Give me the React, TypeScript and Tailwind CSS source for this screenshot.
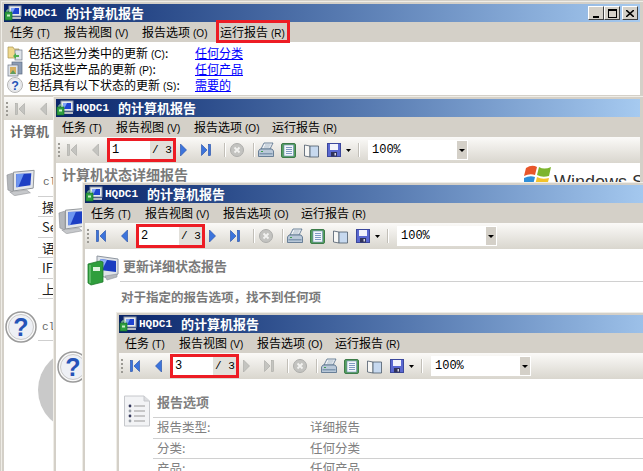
import React from "react";

const CJK = { fontFamily: '"Noto Sans CJK SC", "Liberation Sans", sans-serif' };

function Key({ k }: { k: string }) {
  return <span className="ml-[3px] text-[10px] font-['Liberation_Sans',sans-serif]">({k})</span>;
}

function Monitor({ className = "" }: { className?: string }) {
  return (
    <svg viewBox="0 0 32 28" className={className}>
      <path d="M8 3 L30 1 L29 20 L8 23 Z" fill="#e3e6ea" stroke="#8e9296" />
      <path d="M11 5 L27 4 L26 17 L11 19 Z" fill="#1d3fc4" />
      <path d="M11 5 L19 5 L13 19 L11 19 Z" fill="#6d95f0" />
      <path d="M1 6 L7 4 L7 24 L2 22 Z" fill="#b4b7bb" stroke="#85888c" strokeWidth=".6" />
      <path d="M4 24 L22 22 L26 25 L9 28 Z" fill="#c6c8cb" stroke="#909396" strokeWidth=".6" />
    </svg>
  );
}

function TitleIcon() {
  return (
    <svg viewBox="0 0 18 18" className="w-[18px] h-[18px] shrink-0">
      <rect x="5" y="2" width="12" height="10" fill="#e4e8ee" stroke="#8b95a5" />
      <rect x="7" y="4" width="8" height="6" fill="#1f44d0" />
      <path d="M7 4 H11 L8 10 H7 Z" fill="#7ea2f5" />
      <path d="M6 13 H17 V15 H6 Z" fill="#b9bdc4" />
      <rect x="1" y="8" width="7" height="8" fill="#2f9e3f" stroke="#14702a" strokeWidth=".7" />
      <path d="M3 8 V6 H6 V8" fill="none" stroke="#8fd29a" />
      <rect x="3" y="10.5" width="3" height="2" fill="#c8f0c8" />
    </svg>
  );
}

function HelpIcon({ className = "" }: { className?: string }) {
  return (
    <svg viewBox="0 0 32 32" className={className}>
      <circle cx="16" cy="16" r="15" fill="#fafafa" stroke="#9a9a9a" strokeWidth="1.5" />
      <circle cx="16" cy="16" r="12.5" fill="#eef0f5" stroke="#c9c9c9" />
      <text x="16" y="25" textAnchor="middle" fontSize="25" fontWeight="700" fill="#2554b8" fontFamily="Liberation Sans, sans-serif">?</text>
    </svg>
  );
}

function Grip() {
  return (
    <div className="flex flex-col gap-[2px] ml-[2px] w-[3px] shrink-0">
      <span className="w-[2px] h-[2px] bg-[#9c9a94]" />
      <span className="w-[2px] h-[2px] bg-[#9c9a94]" />
      <span className="w-[2px] h-[2px] bg-[#9c9a94]" />
      <span className="w-[2px] h-[2px] bg-[#9c9a94]" />
    </div>
  );
}

function Nav({ type, on, className = "" }: { type: "first" | "prev" | "next" | "last"; on: boolean; className?: string }) {
  const fill = on ? "#3c74dc" : "#c4c4c0";
  const line = on ? "#1e4aa6" : "#a8a8a4";
  const w = type === "prev" || type === "next" ? 7 : 10;
  const shape = {
    first: <><rect x=".5" y="1.5" width="2" height="11" fill={fill} stroke={line} strokeWidth=".6" /><path d="M9.5 1.5 V12.5 L4 7 Z" fill={fill} stroke={line} strokeWidth=".6" /></>,
    prev: <path d="M6.5 1 V13 L.5 7 Z" fill={fill} stroke={line} strokeWidth=".6" />,
    next: <path d="M.5 1 V13 L6.5 7 Z" fill={fill} stroke={line} strokeWidth=".6" />,
    last: <><path d="M.5 1.5 V12.5 L6 7 Z" fill={fill} stroke={line} strokeWidth=".6" /><rect x="7.5" y="1.5" width="2" height="11" fill={fill} stroke={line} strokeWidth=".6" /></>,
  }[type];
  return <svg viewBox={`0 0 ${w} 14`} className={`shrink-0 h-[14px] ${w === 7 ? "w-[7px]" : "w-[10px]"} ${className}`}>{shape}</svg>;
}

function Sep({ className = "" }: { className?: string }) {
  return <span className={`w-[2px] h-[14px] shrink-0 bg-[#c2bfb8] border-r border-white ${className}`} />;
}

function Toolbar({ page, on }: { page: string; on: [boolean, boolean] }) {
  return (
    <div className="h-[26px] shrink-0 flex items-center bg-gradient-to-b from-[#fbfaf8] to-[#d9d6ce] whitespace-nowrap">
      <Grip />
      <Nav type="first" on={on[0]} className="ml-[6px]" />
      <Nav type="prev" on={on[0]} className="ml-[15px]" />
      <div className="relative ml-[11px] w-[63px] h-[18px] shrink-0 flex text-[11px] font-['Liberation_Mono',monospace] leading-[18px]">
        <span className="w-[40px] bg-white pl-[2px] text-[12px]">{page}</span>
        <span className="w-[23px] bg-[#e2e0da] pl-[2px]">/ 3</span>
        <span className="absolute -left-[3px] -right-[3px] -top-[3px] -bottom-[3px] border-[3px] border-[#ed1c24]" />
      </div>
      <Nav type="next" on={on[1]} className="ml-[7px]" />
      <Nav type="last" on={on[1]} className="ml-[14px]" />
      <Sep className="ml-[13px]" />
      <svg viewBox="0 0 14 14" className="w-[14px] h-[14px] ml-[4px] shrink-0">
        <circle cx="7" cy="7" r="6.5" fill="#c3c3c0" stroke="#adadaa" />
        <path d="M4.5 4.5 L9.5 9.5 M9.5 4.5 L4.5 9.5" stroke="#f2f2f0" strokeWidth="1.8" />
      </svg>
      <Sep className="ml-[9px]" />
      <svg viewBox="0 0 16 16" className="w-[16px] h-[16px] ml-[3px] shrink-0">
        <path d="M6 1 H15 L12 7 H3 Z" fill="#eef1f4" stroke="#4f6a86" strokeWidth=".8" />
        <path d="M7 3 H12.5 M6 5 H11.5" stroke="#8aa0b6" strokeWidth=".7" />
        <path d="M2 7 H14 L15.5 9 V14.5 H.5 V9 Z" fill="#b9c8d8" stroke="#4f6a86" strokeWidth=".8" />
        <rect x="1.5" y="11" width="13" height="1.5" fill="#8098b0" />
        <rect x="3" y="9" width="2" height="1" fill="#3f9e4f" />
      </svg>
      <svg viewBox="0 0 15 15" className="w-[15px] h-[15px] ml-[7px] shrink-0">
        <rect x=".5" y=".5" width="14" height="14" rx="1.5" fill="#56a05f" stroke="#3c7b48" />
        <rect x="3" y="2" width="9.5" height="11" fill="#f2f6fb" stroke="#6f8db5" strokeWidth=".6" />
        <path d="M5 4.5 H11 M5 6.5 H11 M5 8.5 H11 M5 10.5 H11" stroke="#5f82b4" strokeWidth=".8" />
      </svg>
      <svg viewBox="0 0 15 15" className="w-[15px] h-[15px] ml-[8px] shrink-0">
        <path d="M.5 2 L6 3 V14 L.5 13 Z" fill="#f7f7f5" stroke="#4d5b6b" strokeWidth=".8" />
        <path d="M6 3 H14.5 V14 H6 Z" fill="#c7d9ef" stroke="#4d5b6b" strokeWidth=".8" />
      </svg>
      <svg viewBox="0 0 14 14" className="w-[14px] h-[14px] ml-[8px] shrink-0">
        <rect x=".5" y=".5" width="13" height="13" fill="#5a68d0" stroke="#3b479c" />
        <rect x="3" y="1" width="8" height="6" fill="#f2f3fb" />
        <rect x="4" y="9" width="6" height="4.5" fill="#30335a" />
        <rect x="7.5" y="10" width="1.5" height="2.5" fill="#d8d8e8" />
      </svg>
      <svg viewBox="0 0 5 3" className="w-[5px] h-[3px] ml-[5px] shrink-0"><path d="M0 0 H5 L2.5 3 Z" fill="#000" /></svg>
      <Sep className="ml-[7px]" />
      <div className="ml-[8px] w-[100px] h-[20px] shrink-0 flex bg-white text-[12px] leading-[20px] font-['Liberation_Mono',monospace]">
        <span className="flex-1 pl-[4px]">100%</span>
        <span className="my-[1px] mr-[1px] w-[10px] bg-[#d4d0c8] flex items-center justify-center">
          <svg viewBox="0 0 6 3" className="w-[6px] h-[3px]"><path d="M0 0 H6 L3 3 Z" fill="#000" /></svg>
        </span>
      </div>
    </div>
  );
}

function Menu({ pressed = false }: { pressed?: boolean }) {
  return (
    <div style={CJK} className="h-[20px] shrink-0 flex items-center pl-[6px] text-[12px] text-black whitespace-nowrap">
      <span className="w-[54px]">任务<Key k="T" /></span>
      <span className="w-[78px]">报告视图<Key k="V" /></span>
      <span className="w-[78px]">报告选项<Key k="O" /></span>
      <span className="relative">
        运行报告<Key k="R" />
        {pressed && <span className="absolute -left-[4px] -right-[5px] -top-[3px] -bottom-[2px] border-[3px] border-[#ed1c24]" />}
      </span>
    </div>
  );
}

function TitleBar({ buttons = false }: { buttons?: boolean }) {
  return (
    <div className="h-[18px] shrink-0 flex items-center bg-gradient-to-r from-[#0a246a] to-[#a6caf0] text-white font-bold whitespace-nowrap">
      <TitleIcon />
      <span className="ml-[2px] text-[11px] font-['Liberation_Mono',monospace]">HQDC1</span>
      <span style={CJK} className="ml-[9px] text-[13px]">的计算机报告</span>
      {buttons && (
        <div className="ml-auto mr-[2px] flex text-black">
          <button className="w-[16px] h-[14px] bg-[#d4d0c8] border border-t-white border-l-white border-r-[#404040] border-b-[#404040] flex items-end justify-center pb-[1px]"><span className="w-[6px] h-[2px] bg-black" /></button>
          <button className="w-[16px] h-[14px] bg-[#d4d0c8] border border-t-white border-l-white border-r-[#404040] border-b-[#404040] flex items-center justify-center"><span className="w-[9px] h-[9px] border border-t-2 border-black" /></button>
          <button className="ml-[2px] w-[16px] h-[14px] bg-[#d4d0c8] border border-t-white border-l-white border-r-[#404040] border-b-[#404040] flex items-center justify-center">
            <svg viewBox="0 0 8 7" className="w-[8px] h-[7px]"><path d="M0 0 L8 7 M8 0 L0 7" stroke="#000" strokeWidth="1.6" /></svg>
          </button>
        </div>
      )}
    </div>
  );
}

function Win({ x, y, w, z, children }: { x: number; y: number; w: number; z: number; children: React.ReactNode }) {
  return (
    <div
      style={{ left: x, top: y, width: w, height: 480 - y, zIndex: z }}
      className="absolute flex flex-col bg-[#d4d0c8] border-l border-t border-[#efede7] pl-[2px] pt-[2px] pr-[3px] overflow-hidden"
    >
      {children}
    </div>
  );
}

function FolderIcon() {
  return (
    <svg viewBox="0 0 16 16" className="w-[16px] h-[16px] shrink-0">
      <path d="M1 2 H6 L7 4 H12 V13 H1 Z" fill="#f0d98c" stroke="#a89450" strokeWidth=".7" />
      <rect x="8" y="5" width="7" height="10" fill="#dfe4ea" stroke="#6f7a88" strokeWidth=".7" />
      <path d="M6 11 L9 8 V10 H12 V12 H9 V14 Z" fill="#4fb04f" />
    </svg>
  );
}

function ProductIcon() {
  return (
    <svg viewBox="0 0 16 16" className="w-[16px] h-[16px] shrink-0">
      <rect x="5" y="1" width="10" height="12" fill="#8d9db5" stroke="#5d6b80" strokeWidth=".7" />
      <rect x="1" y="4" width="10" height="11" fill="#dfe3e8" stroke="#6d7686" strokeWidth=".7" />
      <rect x="3" y="6" width="6" height="7" fill="#d8b060" />
      <path d="M3 13 L6 9 L9 13 Z" fill="#5f9d5f" />
    </svg>
  );
}

function Row({ icon, label, k, tail, link }: { icon: React.ReactNode; label: string; k: string; tail: string; link: string }) {
  return (
    <div className="h-[16px] flex items-center whitespace-nowrap">
      <span className="w-[21px] pl-[3px] shrink-0 flex">{icon}</span>
      <span className="w-[170px] shrink-0 pl-[3px]">{label}<span className="ml-[3px] text-[10px] font-['Liberation_Sans',sans-serif]">({k})</span>{tail}</span>
      <a className="text-[#0000ff] underline">{link}</a>
    </div>
  );
}

function BookIcon() {
  return (
    <svg viewBox="0 0 32 32" className="w-[32px] h-[32px] shrink-0">
      <path d="M10 1 L31 4 V19 L21 23 L10 20 Z" fill="#dfe3e8" stroke="#8f96a0" />
      <path d="M13 4 L29 6 V17 L13 15 Z" fill="#1a3cc0" />
      <path d="M13 4 L20 5 L15 15 L13 15 Z" fill="#8fb0f5" />
      <path d="M18 21 L30 19 V22 L20 25 Z" fill="#b5b8bc" stroke="#8f96a0" strokeWidth=".6" />
      <path d="M1 9 L13 6 L16 7 V27 L4 30 L1 28 Z" fill="#2f9e3c" stroke="#1f7a2c" strokeWidth=".8" />
      <path d="M3 10 V28" stroke="#86d48e" strokeWidth="1" />
      <rect x="6" y="12" width="7" height="4" fill="#dff3df" />
    </svg>
  );
}

function ListIcon() {
  return (
    <svg viewBox="0 0 26 32" className="w-[26px] h-[32px] shrink-0">
      <path d="M.5 1 H20 L25.5 6 V31 H.5 Z" fill="#f2f3f5" stroke="#c6c8cc" />
      <path d="M20 1 V6 H25.5" fill="#dcdde0" stroke="#c6c8cc" />
      <g fill="#34385c"><circle cx="6" cy="11" r="1.4" /><circle cx="6" cy="21" r="1.4" /></g>
      <g fill="#9aa0a8"><circle cx="6" cy="16" r="1.4" /><circle cx="6" cy="26" r="1.4" /></g>
      <path d="M10 11 H21 M10 16 H21 M10 21 H21 M10 26 H21" stroke="#9a9a9a" strokeWidth="1.2" />
    </svg>
  );
}

function WinFlag() {
  return (
    <svg viewBox="0 0 28 22" className="w-[28px] h-[22px] shrink-0">
      <path d="M2 4 Q8 0 13 3 L11 11 Q6 9 0 12 Z" fill="#e8562a" />
      <path d="M15 3 Q20 6 27 3 L25 12 Q18 14 13 11 Z" fill="#7db52e" />
      <path d="M0 14 Q6 11 11 13 L9 21 Q4 20 -1 22 Z" fill="#2f8fd8" />
      <path d="M13 13 Q18 16 25 14 L23 22 Q16 23 11 21 Z" fill="#f4c32a" />
    </svg>
  );
}

function InfoRow({ label, value }: { label: string; value: string }) {
  return (
    <div className="h-[20.5px] flex items-center border-t border-[#d0d0d0] pl-[4px] whitespace-nowrap">
      <span className="w-[153px] shrink-0">{label}</span>
      <span>{value}</span>
    </div>
  );
}

const side = ["操", "Se", "语", "IF", "上"];

export default function App() {
  return (
    <div className="relative w-[643px] h-[471px] overflow-hidden bg-[#d4d0c8]">
      {/* Window 1 */}
      <Win x={1} y={1} w={642} z={1}>
        <TitleBar buttons />
        <Menu pressed />
        <div style={CJK} className="h-[53px] shrink-0 bg-white pt-[3px] text-[12px] text-black">
          <Row icon={<FolderIcon />} label="包括这些分类中的更新" k="C" tail=":" link="任何分类" />
          <Row icon={<ProductIcon />} label="包括这些产品的更新" k="P" tail=":" link="任何产品" />
          <Row icon={<HelpIcon className="w-[16px] h-[16px]" />} label="包括具有以下状态的更新" k="S" tail=":" link="需要的" />
        </div>
        <div className="h-[2px] shrink-0" />
        <div className="h-[23px] shrink-0 flex items-center bg-gradient-to-b from-[#fbfaf8] to-[#d9d6ce]">
          <Grip />
          <Nav type="first" on={false} className="ml-[6px]" />
          <Nav type="prev" on={false} className="ml-[15px]" />
        </div>
        <div className="flex-1 bg-white relative">
          <div style={CJK} className="pl-[6px] pt-[1px] text-[13px] font-bold text-[#6e6e6e] whitespace-nowrap">计算机</div>
          <div className="flex items-center mt-[28px] ml-[2px]">
            <Monitor className="w-[30px] h-[27px] shrink-0" />
            <span className="ml-[7px] text-[11px] text-[#666] font-['Liberation_Mono',monospace]">cl</span>
          </div>
          <div style={CJK} className="ml-[34px] text-[13px] text-[#222] border-b border-[#cfcfcf]">
            {side.map((s) => (
              <div key={s} className="h-[20.6px] border-t border-[#cfcfcf] pl-[4px] leading-[20px]">{s}</div>
            ))}
          </div>
          <div className="flex items-center mt-[12px] ml-[1px]">
            <HelpIcon className="w-[32px] h-[32px] shrink-0" />
            <span className="ml-[5px] text-[11px] text-[#666] font-['Liberation_Mono',monospace]">cl</span>
          </div>
          <div className="ml-[34px] -mt-[3px] border-t border-[#cfcfcf]" />
          <div className="ml-[34px] mt-[8px] w-[82px] h-[82px] rounded-full bg-[#c9c9c9]" />
        </div>
      </Win>

      {/* Window 2 */}
      <Win x={53} y={96} w={590} z={2}>
        <TitleBar />
        <Menu />
        <Toolbar page="1" on={[false, true]} />
        <div className="flex-1 bg-white">
          <div className="flex items-start justify-between pl-[6px] pt-[1px] h-[28px]">
            <span style={CJK} className="text-[14px] font-bold text-[#7a7a7a] whitespace-nowrap">计算机状态详细报告</span>
            <span className="flex items-start whitespace-nowrap overflow-hidden w-[116px] text-[18px] leading-[20px] text-[#333] font-['Liberation_Sans',sans-serif]">
              <WinFlag />
              <span className="ml-[2px] mt-[8px]">Windows Se</span>
            </span>
          </div>
          <Monitor className="ml-[2px] mt-[16px] w-[30px] h-[27px]" />
          <HelpIcon className="ml-[1px] mt-[117px] w-[32px] h-[32px]" />
        </div>
      </Win>

      {/* Window 3 */}
      <Win x={82} y={182} w={570} z={3}>
        <TitleBar />
        <Menu />
        <Toolbar page="2" on={[true, true]} />
        <div style={CJK} className="flex-1 bg-white text-[#7a7a7a] font-bold">
          <div className="flex items-start mt-[6px] pl-[2px]">
            <BookIcon />
            <div className="flex-1 ml-[1px] pl-[3px] h-[27px] leading-[22px] border-b border-[#d0d0d0] text-[13px] whitespace-nowrap">更新详细状态报告</div>
          </div>
          <div className="pl-[36px] mt-[1px] text-[12.5px] whitespace-nowrap">对于指定的报告选项，找不到任何项</div>
        </div>
      </Win>

      {/* Window 4 */}
      <Win x={116} y={312} w={560} z={4}>
        <TitleBar />
        <Menu />
        <Toolbar page="3" on={[true, false]} />
        <div style={CJK} className="flex-1 bg-white text-[#808080] text-[12.5px] flex items-start pl-[5px] pt-[16px]">
          <ListIcon />
          <div className="flex-1 ml-[3px]">
            <div className="h-[22px] pl-[4px] leading-[14px] text-[13px] font-bold whitespace-nowrap">报告选项</div>
            <InfoRow label="报告类型:" value="详细报告" />
            <InfoRow label="分类:" value="任何分类" />
            <InfoRow label="产品:" value="任何产品" />
          </div>
        </div>
      </Win>
    </div>
  );
}
